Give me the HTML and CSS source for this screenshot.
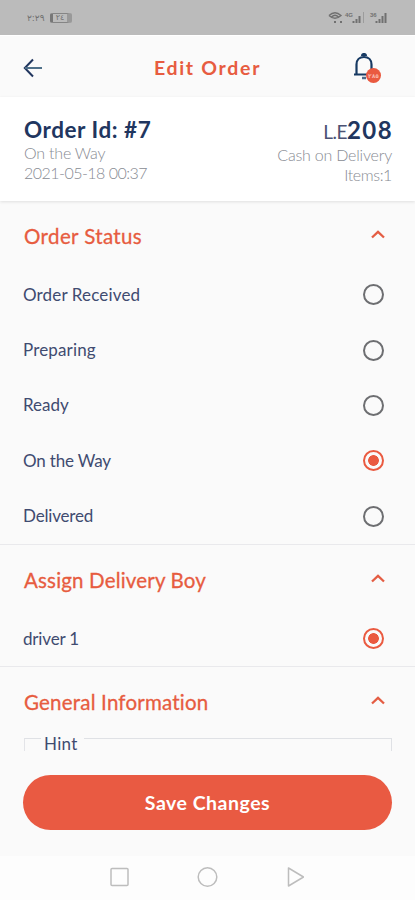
FILE: index.html
```html
<!DOCTYPE html>
<html lang="en">
<head>
<meta charset="utf-8">
<title>Edit Order</title>
<link rel="stylesheet" href="styles.css">
</head>
<body>
<div class="statusbar">
  <div class="status-left">
    <span class="clock">٢:٢٩</span>
    <span class="battery"><span>٢٤</span></span>
  </div>
  <svg class="signals" width="62" height="14" viewBox="0 0 62 14" fill="none" stroke="#707070">
    <path d="M1 4.500Q7 -1 13 4.500Q7 10 1 4.500M3.500 6Q7 2.500 10.500 6" stroke-width="1.400"/>
    <path d="M6 11h2M12 11h2" stroke-width="2"/>
    <text x="17" y="6" class="net">4G</text>
    <path d="M25.500 12v-2M28.500 12V8M31.500 12V5" stroke-width="2"/><path d="M35.500 12V1" stroke="#9c9c9c"/>
    <text x="42" y="6" class="net">36</text>
    <path d="M48.500 12v-2M51.500 12V8M54.500 12V5M57.500 12V2" stroke-width="2"/>
  </svg>
</div>
<header class="header">
  <svg class="back" width="20" height="20" viewBox="0 0 20 20" fill="none" stroke="#21365f" stroke-width="2"><path d="M10 1.500 1.800 10l8.200 8.500"/><path d="M2 10h17" stroke="#4f7089"/></svg>
  <h1>Edit Order</h1>
  <div class="bell">
    <svg width="22" height="28" viewBox="0 0 22 28" fill="none" stroke="#173a63" stroke-width="2.200"><path d="M1 21.500h20M3.500 21V11.500C3.500 6.800 6.500 4 11 4s7.500 2.800 7.500 7.500V21"/><path d="M9 3a2 2 0 0 1 4 0" fill="#173a63"/><path d="M9 25h4" stroke="#4f6a89" stroke-width="2.500"/></svg>
    <span class="count">٢٨٥</span>
  </div>
</header>
<section class="summary">
  <div>
    <h2 class="order-id">Order Id: #7</h2>
    <p class="way">On the Way</p>
    <p class="date">2021-05-18 00:37</p>
  </div>
  <div class="right">
    <h2 class="price"><span class="currency">L.E</span>208</h2>
    <p class="cash">Cash on Delivery</p>
    <p class="items">Items:1</p>
  </div>
</section>
<main>
  <section class="group">
    <div class="group-head"><h3 class="t-status">Order Status</h3><svg class="chev" width="14" height="9" viewBox="0 0 14 9"><path d="m1 7.500 6-5.700 6 5.700"/></svg></div>
    <label class="option"><span class="o-received">Order Received</span><i class="radio"></i></label>
    <label class="option"><span class="o-received">Preparing</span><i class="radio"></i></label>
    <label class="option"><span>Ready</span><i class="radio"></i></label>
    <label class="option"><span class="tight">On the Way</span><i class="radio on"></i></label>
    <label class="option"><span class="tight">Delivered</span><i class="radio"></i></label>
  </section>
  <section class="group">
    <div class="group-head"><h3 class="t-assign">Assign Delivery Boy</h3><svg class="chev" width="14" height="9" viewBox="0 0 14 9"><path d="m1 7.500 6-5.700 6 5.700"/></svg></div>
    <label class="option"><span class="tight">driver 1</span><i class="radio on"></i></label>
  </section>
  <section class="group last">
    <div class="group-head"><h3 class="t-general">General Information</h3><svg class="chev" width="14" height="9" viewBox="0 0 14 9"><path d="m1 7.500 6-5.700 6 5.700"/></svg></div>
    <div class="hint"><i class="edge start"></i><span>Hint</span><i class="edge end"></i></div>
  </section>
</main>
<div class="action"><button class="save">Save Changes</button></div>
<nav class="nav">
  <svg width="194" height="22" viewBox="0 0 194 22" fill="none" stroke="#bdbdbd" stroke-width="1.500"><rect x="1" y="2.500" width="17" height="17" rx="1"/><circle cx="97.500" cy="11" r="9.300"/><path d="M178.500 2v18l15-9z" stroke-linejoin="round"/></svg>
</nav>
</body>
</html>
```
FILE: styles.css
```css
* { box-sizing: border-box; }
body { margin: 0; height: 900px; display: flex; flex-direction: column; overflow: hidden; background: #fafafa; color: #404b70; font-family: Lato, "Liberation Sans", sans-serif; font-variant-ligatures: none; }
h1, h2, h3, p { margin: 0; white-space: nowrap; }
i { font-style: normal; }
.statusbar { height: 35px; flex: none; background: #bbb; display: flex; align-items: center; justify-content: space-between; padding: 0 25px 0 27px; }
.status-left { display: flex; align-items: center; gap: 5px; color: #707070; font: 9px/12px "DejaVu Sans", sans-serif; }
.clock { width: 18px; white-space: nowrap; }
.battery { width: 22px; height: 10px; border: 1px solid #858585; border-left: 3px solid #777; border-right: 5px solid #999; border-radius: 2px; display: flex; align-items: center; justify-content: center; font-size: 8px; }
.net { font: bold 6px "Liberation Sans", sans-serif; fill: #707070; stroke: none; }
.header { height: 62px; flex: none; display: grid; grid-template-columns: 60px 1fr 71px; align-items: center; padding: 3px 12px 0 23px; border-top: 1px solid #fff; }
h1 { font-size: 19.5px; line-height: 26px; font-weight: 700; letter-spacing: 1.7px; color: #e75c40; text-align: center; }
.bell { position: relative; width: 30px; height: 30px; justify-self: end; margin-right: 24px; }
.bell svg { display: block; margin-left: 4px; }
.count { position: absolute; left: 17px; top: 15px; width: 15px; height: 15px; border-radius: 50%; background: #ea5a40; color: #f9b6a8; font: bold 6px/15px "DejaVu Sans", sans-serif; text-align: center; }
.summary { height: 104px; flex: none; display: flex; justify-content: space-between; padding: 19px 23px 0 24px; background: #fff; box-shadow: 0 1px 3px #0000001c; z-index: 1; }
h2 { font-size: 22px; line-height: 28px; font-weight: 700; color: #21365f; }
.order-id { font-size: 22.5px; letter-spacing: .55px; margin-bottom: -1px; }
.price { font-size: 24px; letter-spacing: 1.4px; margin-right: -1px; }
.currency { font-size: 19px; font-weight: 400; letter-spacing: -.5px; color: #4b5274; }
.summary p { height: 20px; font-size: 16px; line-height: 20px; font-weight: 300; color: #888b93; }
.summary .way { letter-spacing: -.2px; }
.summary .date { letter-spacing: -.52px; }
.summary .cash { letter-spacing: -.2px; margin-top: -1px; }
.summary .items { letter-spacing: -.4px; }
.right { text-align: right; }
.group { border-bottom: 1px solid #e9e9ec; }
.group.last { border: 0; }
.group-head { height: 66px; display: flex; justify-content: space-between; align-items: center; padding: 0 30px 0 24px; }
h3 { font-size: 20.5px; line-height: 26px; font-weight: 400; color: #e75c40; padding-top: 4px; height: 30px; -webkit-text-stroke: .3px #e75c40; }
.t-status { letter-spacing: .38px; }
.t-assign { letter-spacing: .17px; }
.t-general { letter-spacing: .2px; }
.chev { fill: none; stroke: #e45d43; stroke-width: 2.3; margin-top: 1px; }
.option { height: 55.4px; display: flex; align-items: center; justify-content: space-between; padding: 0 31px 0 23px; font-size: 17px; line-height: 22px; }
.o-received { letter-spacing: .15px; }
.tight { letter-spacing: -.17px; }
.radio { width: 21px; height: 21px; border: 2px solid #6d6e71; border-radius: 50%; }
.radio.on { border-color: #ea5a40; background: radial-gradient(circle, #ea5a40 5px, transparent 5.7px); }
.hint { display: grid; grid-template-columns: 17px 43px 1fr; padding: 0 23px 0 24px; height: 18px; font-size: 17px; line-height: 22px; letter-spacing: .3px; }
.hint span { padding-left: 3px; }
.edge { margin-top: 5px; height: 13px; border-top: 1px solid #dfe1e5; }
.edge.start { border-left: 1px solid #e3e4e8; }
.edge.end { border-right: 1px solid #dfe1e5; }
.action { margin-top: auto; padding: 0 23px 26px; }
.save { display: block; width: 100%; height: 55px; border: 0; border-radius: 28px; background: #e95a42; color: #fff; font: 700 19.5px/55px Lato, sans-serif; letter-spacing: .5px; padding: 0; }
.nav { height: 44px; flex: none; background: #fdfdfd; display: flex; justify-content: center; align-items: center; padding-bottom: 2px; margin-left: -1px; }
```
